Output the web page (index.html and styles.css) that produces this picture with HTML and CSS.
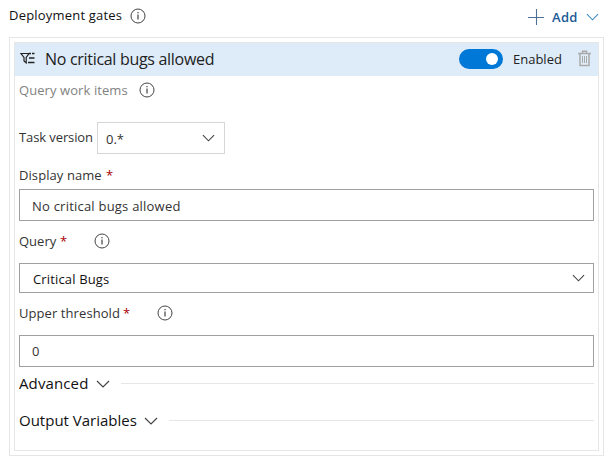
FILE: index.html
```html
<!DOCTYPE html>
<html lang="en">
<head>
<meta charset="utf-8">
<title>Deployment gates</title>
<link rel="stylesheet" href="styles.css">
</head>
<body>
<svg width="0" height="0" class="defs">
  <symbol id="info" viewBox="0 0 16 16"><circle cx="8" cy="8" r="7" fill="none" stroke="currentColor"/><path d="M8 6.5v5M8 4v1.3" fill="none" stroke="currentColor" stroke-width="1.2"/></symbol>
  <symbol id="chevron" viewBox="0 0 14 8"><path d="M1 1l6 6 6-6" fill="none" stroke="currentColor" stroke-width="1.2"/></symbol>
</svg>
<header class="top">
  <span class="title">Deployment gates</span>
  <svg class="info"><use href="#info"/></svg>
  <div class="add">
    <svg class="plus" viewBox="0 0 16 16"><path d="M8.5 0v16M0 8.5h16" stroke="currentColor" stroke-width="1.1"/></svg>
    <span class="add-label">Add</span>
    <svg class="chevron"><use href="#chevron"/></svg>
  </div>
</header>
<main class="panel">
  <section class="gate">
    <div class="gate-head">
      <svg class="query-icon" viewBox="0 0 16 14"><path d="M1 2.5h8L6.2 6.5v5.5L4 10V6.5z" fill="none" stroke="currentColor" stroke-width="1.2"/><path d="M9 2.5h2M12 2.5h2.5M9 7h5.500M8 11.500h6.500" fill="none" stroke="currentColor" stroke-width="1.7"/></svg>
      <span class="gate-name">No critical bugs allowed</span>
      <span class="toggle"></span>
      <span class="enabled">Enabled</span>
      <svg class="trash" viewBox="0 0 13 17"><path d="M4.500 3V1.200h4V3M0 3.500h13M2 4v11.500h9V4" fill="none" stroke="currentColor" stroke-width="1.5"/><path d="M4.500 6v7M6.500 6v7M8.500 6v7" stroke="currentColor"/></svg>
    </div>
    <div class="body">
      <div class="row subtitle"><span class="sub-label">Query work items</span><svg class="info"><use href="#info"/></svg></div>
      <div class="row version"><span class="version-label">Task version</span><div class="select small"><span>0.*</span><svg class="chevron"><use href="#chevron"/></svg></div></div>
      <div class="row label first"><span class="display-label">Display name</span><b>*</b></div>
      <div class="field"><span class="display-value">No critical bugs allowed</span></div>
      <div class="row label"><span class="query-label">Query</span><b>*</b><svg class="info"><use href="#info"/></svg></div>
      <div class="field select dark"><span class="query-value">Critical Bugs</span><svg class="chevron"><use href="#chevron"/></svg></div>
      <div class="row label"><span class="upper-label">Upper threshold</span><b>*</b><svg class="info"><use href="#info"/></svg></div>
      <div class="field"><span class="threshold-value">0</span></div>
      <div class="row group"><span class="advanced">Advanced</span><svg class="chevron"><use href="#chevron"/></svg><i></i></div>
      <div class="row group last"><span class="output">Output Variables</span><svg class="chevron"><use href="#chevron"/></svg><i></i></div>
    </div>
  </section>
</main>
</body>
</html>
```
FILE: styles.css
```css
* { box-sizing: border-box; }
body { margin: 0; width: 610px; height: 465px; overflow: hidden; background: #fff; color: #333; font: 13px/20px "Open Sans", "Noto Sans", sans-serif; white-space: nowrap; }
.defs { position: absolute; }
svg, .toggle { flex: none; display: block; }
.top { height: 37px; padding: 5px 11px 10px 9px; display: flex; align-items: center; color: #111; }
.info { width: 16px; height: 16px; color: #444; margin-bottom: 2px; }
.top .info { margin-left: 8px; margin-bottom: 1px; }
.title { width: 113px; letter-spacing: .2px; padding-bottom: 2px; }
.add { margin-left: auto; display: flex; align-items: center; color: #1a5a96; padding-top: 2px; }
.plus { width: 16px; height: 16px; color: #4f7196; }
.add-label { width: 26px; margin: 0 8px; font-weight: 600; letter-spacing: .3px; }
.chevron { width: 13px; height: 8px; color: #444; }
.add .chevron { color: #4389bd; }
.panel { margin: 0 6px 0 9px; height: 419px; border: 1px solid #e6e6e6; padding: 4px; }
.gate { height: 409px; border: 1px solid #e6e6e6; }
.gate-head { height: 33px; background: #deecf9; display: flex; align-items: center; padding: 0 7px 0 5px; color: #222; }
.query-icon { width: 16px; height: 14px; margin-bottom: 3px; }
.gate-name { font-size: 16px; letter-spacing: -.3px; margin-left: 9px; padding-bottom: 2px; }
.toggle { width: 44px; height: 20px; border-radius: 10px; background: #0078d7; margin-left: auto; padding: 4px; margin-bottom: 2px; }
.toggle::after { content: ""; display: block; width: 12px; height: 12px; border-radius: 50%; background: #fff; margin-left: 23px; }
.enabled { width: 49px; margin: 0 16px 0 10px; padding-bottom: 2px; }
.trash { width: 13px; height: 17px; color: #aaa; margin-bottom: 3px; }
.body { padding: 0 4px; }
.row { display: flex; align-items: center; }
.subtitle { height: 29px; color: #828282; }
.subtitle .info { margin-left: 11px; }
.sub-label { width: 109px; letter-spacing: .08px; padding-bottom: 2px; }
.version { margin-top: 17px; height: 32px; }
.version-label { width: 74px; margin-right: 4px; letter-spacing: -.1px; padding-bottom: 2px; }
.select { display: flex; align-items: center; justify-content: space-between; }
.small { border: 1px solid #d6d6d6; width: 128px; height: 32px; padding: 1px 9px 0 8px; }
.small .chevron { margin-bottom: 2px; }
.label { height: 42px; }
.label.first { height: 35px; padding-top: 7px; }
.label span, .label b { padding-bottom: 2px; }
.label.first span, .label.first b { padding-bottom: 0; }
.label b { font-weight: 400; color: #a80000; width: 7px; margin-left: 5px; }
.label .info { margin-left: 27px; }
.display-label { width: 82px; letter-spacing: .08px; }
.query-label { width: 36px; }
.upper-label { width: 99px; letter-spacing: .08px; }
.display-value { letter-spacing: .22px; }
.query-value { letter-spacing: .15px; }
.threshold-value { padding-bottom: 2px; }
.field { height: 32px; border: 1px solid #a0a0a0; padding: 2px 8px 0 12px; display: flex; align-items: center; }
.field.dark { height: 30px; color: #111; padding-left: 13px; }
.dark .chevron { margin-bottom: 2px; }
.group { height: 33px; color: #111; font-size: 15px; }
.group span { padding-bottom: 2px; }
.group.last { height: 41px; }
.group i { height: 1px; background: #e6e6e6; flex: 1; }
.group .chevron { width: 14px; margin: 0 11px 0 7px; }
.advanced { width: 70px; letter-spacing: .12px; }
.output { width: 118px; }
```
